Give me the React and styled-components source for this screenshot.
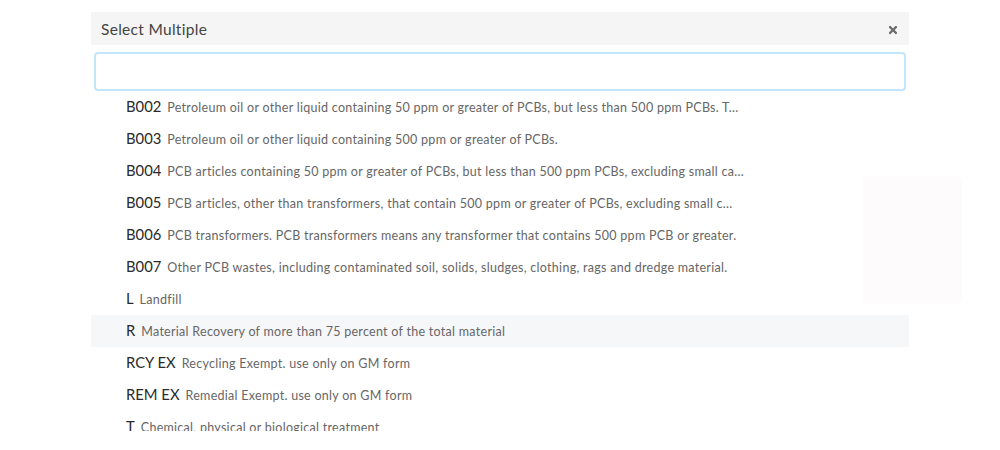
import React from 'react'
import styled, { createGlobalStyle } from 'styled-components'
import { FaTimes } from 'react-icons/fa'

const GlobalStyle = createGlobalStyle`
    html, body {
        margin: 0;
        padding: 0;
        background: #ffffff;
        font-family: Lato, "Open Sans", Arial, sans-serif;
    }
`

const Page = styled.div`
    position: relative;
    width: 1000px;
    height: 450px;
    overflow: hidden;
    padding-top: 12px;
    box-sizing: border-box;
`

const Panel = styled.div`
    width: 818px;
    margin-left: 91px;
`

const Header = styled.div`
    display: flex;
    align-items: center;
    justify-content: space-between;
    height: 33px;
    padding: 0 10px;
    background: #f5f5f5;
    color: #444;
    font-size: 15.5px;
    letter-spacing: 0.3px;
`

const Close = styled.span`
    display: flex;
    align-items: center;
    color: #6a6a6a;
    margin-top: 2px;
`

const Search = styled.input`
    display: block;
    box-sizing: border-box;
    width: 812px;
    height: 39px;
    margin: 7px 3px 0;
    border: 2px solid #c2e6fb;
    border-radius: 4px;
    outline: none;
    background: #fff;
`

const List = styled.div`
    height: 340px;
    overflow: hidden;
`

const Row = styled.div`
    display: flex;
    align-items: baseline;
    height: 32px;
    line-height: 30px;
    padding-left: 35px;
    background: ${p => (p.active ? '#f6f7f9' : 'transparent')};
    white-space: nowrap;
`

const Code = styled.span`
    font-size: 14.8px;
    color: #2a2a2a;
    margin-right: 6px;
`

const Desc = styled.span`
    font-size: 12.5px;
    letter-spacing: 0.28px;
    color: #666;
`

const Ghost = styled.div`
    position: absolute;
    left: 863px;
    top: 178px;
    width: 99px;
    height: 124px;
    background: #fdfbfc;
`

const items = [
    ['B002', 'Petroleum oil or other liquid containing 50 ppm or greater of PCBs, but less than 500 ppm PCBs. T...'],
    ['B003', 'Petroleum oil or other liquid containing 500 ppm or greater of PCBs.'],
    ['B004', 'PCB articles containing 50 ppm or greater of PCBs, but less than 500 ppm PCBs, excluding small ca...'],
    ['B005', 'PCB articles, other than transformers, that contain 500 ppm or greater of PCBs, excluding small c...'],
    ['B006', 'PCB transformers. PCB transformers means any transformer that contains 500 ppm PCB or greater.'],
    ['B007', 'Other PCB wastes, including contaminated soil, solids, sludges, clothing, rags and dredge material.'],
    ['L', 'Landfill'],
    ['R', 'Material Recovery of more than 75 percent of the total material'],
    ['RCY EX', 'Recycling Exempt. use only on GM form'],
    ['REM EX', 'Remedial Exempt. use only on GM form'],
    ['T', 'Chemical, physical or biological treatment'],
]

export default function App() {
    return (
        <Page>
            <GlobalStyle />
            <Panel>
                <Header>
                    <span>Select Multiple</span>
                    <Close><FaTimes size={12} /></Close>
                </Header>
                <Search type="text" />
                <List>
                    {items.map(([code, desc]) => (
                        <Row key={code} active={code === 'R'}>
                            <Code>{code}</Code>
                            <Desc>{desc}</Desc>
                        </Row>
                    ))}
                </List>
            </Panel>
            <Ghost />
        </Page>
    )
}
